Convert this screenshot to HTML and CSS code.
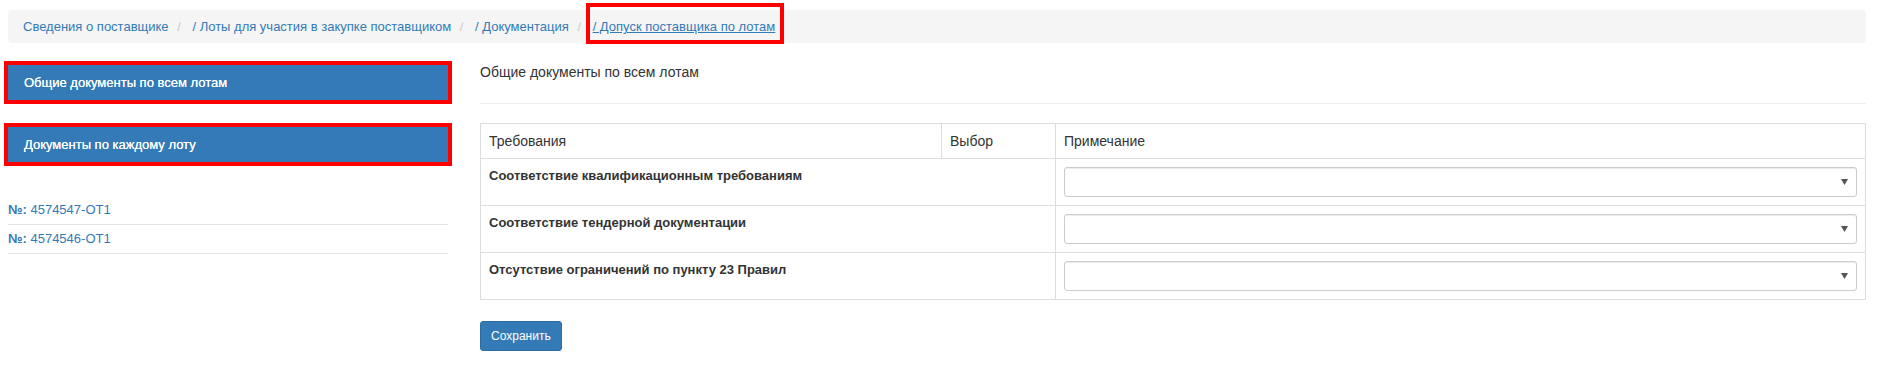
FILE: index.html
```html
<!DOCTYPE html>
<html lang="ru">
<head>
    <meta charset="UTF-8">
    <meta name="viewport" content="width=device-width, initial-scale=1.0">
    <title>Допуск поставщика по лотам</title>
    <link rel="stylesheet" href="styles.css">
</head>
<body>
    <div class="page">
        <ol class="breadcrumb">
            <li><a href="#">Сведения о поставщике</a></li>
            <li><a href="#">/ Лоты для участия в закупке поставщиком</a></li>
            <li><a href="#">/ Документация</a></li>
            <li class="current"><a href="#">/ Допуск поставщика по лотам</a></li>
        </ol>

        <div class="layout">
            <aside class="sidebar">
                <a href="#" class="side-btn">Общие документы по всем лотам</a>
                <a href="#" class="side-btn">Документы по каждому лоту</a>

                <ul class="lots">
                    <li><a href="#"><b>№:</b> 4574547-OT1</a></li>
                    <li><a href="#"><b>№:</b> 4574546-OT1</a></li>
                </ul>
            </aside>

            <main class="content">
                <h4 class="section-title">Общие документы по всем лотам</h4>

                <form>
                    <table class="req-table">
                        <thead>
                            <tr>
                                <th class="col-req">Требования</th>
                                <th class="col-choice">Выбор</th>
                                <th>Примечание</th>
                            </tr>
                        </thead>
                        <tbody>
                            <tr>
                                <td colspan="2" class="req-name">Соответствие квалификационным требованиям</td>
                                <td><select class="note-select"><option></option></select></td>
                            </tr>
                            <tr>
                                <td colspan="2" class="req-name">Соответствие тендерной документации</td>
                                <td><select class="note-select"><option></option></select></td>
                            </tr>
                            <tr>
                                <td colspan="2" class="req-name">Отсутствие ограничений по пункту 23 Правил</td>
                                <td><select class="note-select"><option></option></select></td>
                            </tr>
                        </tbody>
                    </table>

                    <button type="submit" class="btn-save">Сохранить</button>
                </form>
            </main>
        </div>
    </div>
</body>
</html>
```

FILE: styles.css
```css
* {
    margin: 0;
    padding: 0;
    box-sizing: border-box;
}

body {
    font-family: "Liberation Sans", Arial, sans-serif;
    font-size: 14px;
    color: #333;
    background-color: #fff;
}

a {
    color: #337ab7;
    text-decoration: none;
}

.page {
    padding: 10px 13px 0 8px;
}

/* breadcrumb */

.breadcrumb {
    list-style: none;
    background-color: #f5f5f5;
    border-radius: 4px;
    padding: 7px 15px;
    line-height: 19px;
    font-size: 13px;
}

.breadcrumb li {
    display: inline-block;
}

.breadcrumb li + li::before {
    content: "/\00a0";
    padding: 0 8px 0 5px;
    color: #ccc;
}

.breadcrumb .current a {
    display: inline-block;
    position: relative;
    text-decoration: underline;
}

.breadcrumb .current a::after {
    content: "";
    position: absolute;
    top: -14px;
    bottom: -8px;
    left: -7px;
    right: -9px;
    border: 4px solid #f00;
}

/* layout */

.layout {
    display: grid;
    grid-template-columns: 440px 1fr;
    gap: 32px;
    margin-top: 19px;
}

.sidebar {
    padding-top: 3px;
}

.side-btn {
    display: block;
    background-color: #337ab7;
    color: #fff;
    font-size: 13px;
    line-height: 19px;
    padding: 8px 16px;
    outline: 4px solid #f00;
    margin-bottom: 27px;
    text-shadow: 0 0 0.4px #fff;
}

.lots {
    list-style: none;
    padding-top: 7px;
}

.lots li {
    border-bottom: 1px solid #e5e5e5;
    padding: 5px 0;
    line-height: 18px;
    font-size: 13px;
}

/* content */

.section-title {
    font-size: 14px;
    font-weight: normal;
    line-height: 20px;
    padding-bottom: 21px;
    border-bottom: 1px solid #eee;
    margin-bottom: 19px;
}

.req-table {
    width: 100%;
    border-collapse: collapse;
    margin-bottom: 21px;
}

.req-table th,
.req-table td {
    border: 1px solid #ddd;
    padding: 8px;
    line-height: 18px;
    text-align: left;
    vertical-align: top;
}

.req-table th {
    font-weight: normal;
    font-size: 14px;
}

.col-req {
    width: 461px;
}

.col-choice {
    width: 114px;
}

.req-name {
    font-weight: bold;
    font-size: 13px;
}

.note-select {
    display: block;
    width: 100%;
    height: 30px;
    border: 1px solid #ccc;
    border-radius: 3px;
    background-color: #fff;
    box-shadow: inset 0 1px 1px rgba(0, 0, 0, 0.075);
    appearance: none;
    -webkit-appearance: none;
    background-image: url("data:image/svg+xml,%3Csvg xmlns='http://www.w3.org/2000/svg' width='7' height='6'%3E%3Cpath d='M0 0h7L3.5 6z' fill='%23555'/%3E%3C/svg%3E");
    background-repeat: no-repeat;
    background-position: right 8px center;
}

.btn-save {
    font-family: inherit;
    font-size: 12px;
    line-height: 18px;
    padding: 5px 10px;
    color: #fff;
    background-color: #337ab7;
    border: 1px solid #2e6da4;
    border-radius: 3px;
    cursor: pointer;
}

.btn-save:hover {
    background-color: #286090;
}
```
